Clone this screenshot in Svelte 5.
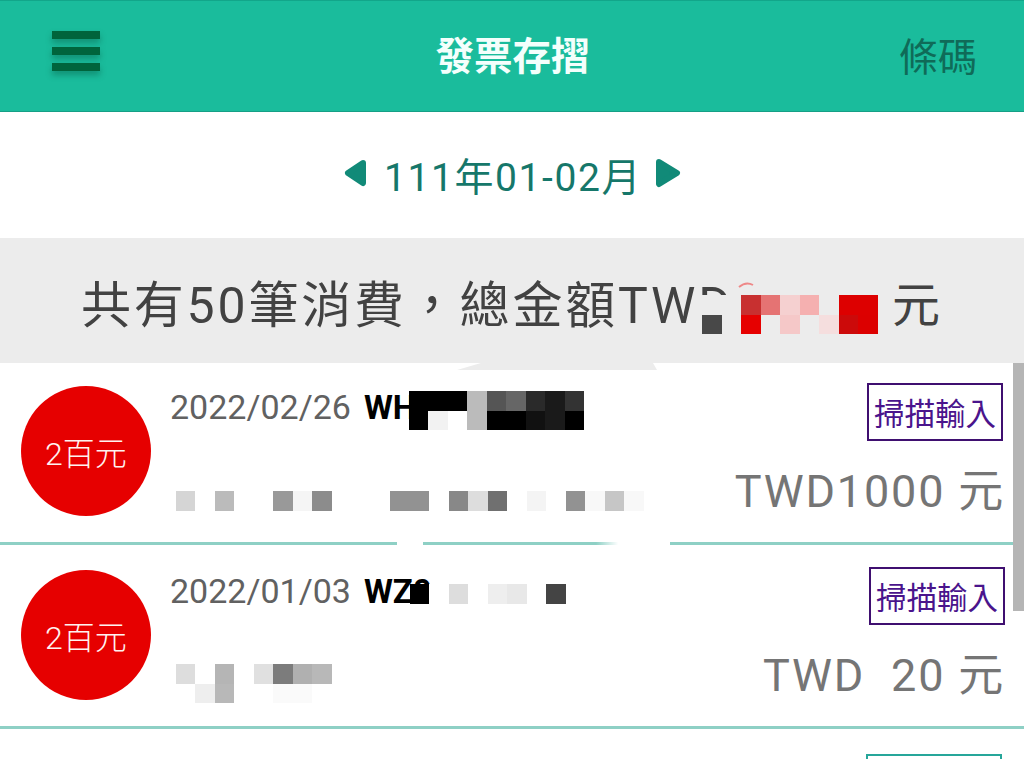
<script lang="ts">
  const bg = "#ececec";

  const items = [
    {
      date: "2022/02/26",
      code: "WH",
      amount: "TWD1000 元",
      shifted: false,
      name: {
        x: 408.5,
        y: 28,
        rows: [
          ["#000", "#000", "#000", "#bbb", "#555", "#666", "#2a2a2a", "#1a1a1a", "#333"],
          ["#000", "#f2f2f2", "#fff", "#bbb", "#000", "#000", "#111", "#1a1a1a", "#000"]
        ]
      },
      note: {
        x: 175.5,
        y: 128,
        rows: [
          ["#d5d5d5", "", "#bbb", "", "", "#999", "#f5f5f5", "#8c8c8c", "", "", "", "#929292", "#929292", "", "#888", "#ddd", "#707070", "", "#f4f4f4", "", "#929292", "#f8f8f8", "#c6c6c6", "#f8f8f8"]
        ]
      }
    },
    {
      date: "2022/01/03",
      code: "WZ0",
      amount: "TWD\u00a0 20 元",
      shifted: true,
      name: {
        x: 409.5,
        y: 39,
        rows: [["#000", "#fff", "#ddd", "", "#eee", "#e8e8e8", "", "#444"]]
      },
      note: {
        x: 175.5,
        y: 119,
        rows: [
          ["#ddd", "", "#b5b5b5", "", "#e0e0e0", "#7c7c7c", "#b0b0b0", "#b8b8b8"],
          ["", "#eee", "#b8b8b8", "", "", "#fafafa", "#fafafa", ""]
        ]
      }
    }
  ];

  const summaryMask = {
    x: 702,
    y: 57,
    rows: [
      [bg, bg, "#c83030", "#e57373", "#f5d0d0", "#f5b0b0", bg, "#dd0000", "#dd0000"],
      ["#484848", bg, "#e60000", bg, "#f5c8c8", bg, "#f5dede", "#cc0a0a", "#dc0000"],
      [bg, bg, bg, bg, bg, bg, bg, bg, bg]
    ]
  };
</script>

{#snippet mosaic(m)}
  <div class="mosaic" style="left: {m.x}px; top: {m.y}px">
    {#each m.rows as row}
      <div class="mosaic-row">
        {#each row as c}
          <span style="background: {c || 'transparent'}"></span>
        {/each}
      </div>
    {/each}
  </div>
{/snippet}

<div class="page">
  <header class="topbar">
    <div class="menu"><i></i><i></i><i></i></div>
    <h1>發票存摺</h1>
    <div class="barcode">條碼</div>
  </header>

  <div class="month">
    <svg width="24" height="28" viewBox="0 0 24 28"><path d="M20 4 L5 14 L20 24 Z" fill="#118a78" stroke="#118a78" stroke-width="6" stroke-linejoin="round" /></svg>
    <span>111年01-02月</span>
    <svg width="26" height="30" viewBox="0 0 26 30"><path d="M4 4 L22 15 L4 26 Z" fill="#118a78" stroke="#118a78" stroke-width="6" stroke-linejoin="round" /></svg>
  </div>

  <div class="summary">
    <span class="summary-text">共有50筆消費，總金額TWD</span>
    <span class="summary-unit">元</span>
    {@render mosaic(summaryMask)}
    <svg class="arc" width="16" height="6" viewBox="0 0 16 6"><path d="M1 5 Q8 -1 15 3" fill="none" stroke="#e88" stroke-width="2" /></svg>
    <div class="wedge"></div>
  </div>

  <div class="list">
    {#each items as item}
      <div class="row">
        <div class="badge">2百元</div>
        <div class="info">
          <div class="line"><span class="date">{item.date}</span> <b>{item.code}</b></div>
        </div>
        <div class="side">
          <div class="scan" class:shifted={item.shifted}>掃描輸入</div>
          <div class="amount">{item.amount}</div>
        </div>
        {@render mosaic(item.name)}
        {@render mosaic(item.note)}
      </div>
    {/each}
    <div class="last">
      <div class="scan teal"></div>
    </div>
    <div class="gap one"></div>
    <div class="gap two"></div>
    <div class="scrollbar"></div>
  </div>
</div>

<style>
  :global(body) {
    margin: 0;
    background: #fff;
    overflow: hidden;
  }

  .page {
    width: 1024px;
    height: 759px;
    overflow: hidden;
    font-family: Roboto, "Noto Sans CJK TC", sans-serif;
  }

  .topbar {
    height: 112px;
    box-sizing: border-box;
    background: #1abc9c;
    border-top: 1px solid #12a68a;
    border-bottom: 1px solid #169f86;
    display: grid;
    grid-template-columns: 1fr auto 1fr;
    align-items: center;
    padding: 0 47px 0 52px;
  }

  .menu {
    width: 48px;
    display: flex;
    flex-direction: column;
    gap: 8px;
    margin-bottom: 10px;
    filter: drop-shadow(0 4px 3px rgba(0, 60, 40, 0.35));
  }

  .menu i {
    display: block;
    height: 8px;
    background: #00643c;
  }

  h1 {
    margin: 0;
    font-size: 38.5px;
    font-weight: 700;
    color: #f4fffc;
    line-height: 1;
    position: relative;
    left: -2px;
    top: 1px;
  }

  .barcode {
    justify-self: end;
    font-size: 39px;
    color: #0f6b58;
    line-height: 1;
    padding-top: 4px;
  }

  .month {
    height: 126px;
    display: flex;
    align-items: center;
    justify-content: center;
    color: #16776a;
    font-size: 39px;
    padding-bottom: 2px;
    box-sizing: border-box;
  }

  .month svg {
    margin-top: -2px;
  }

  .month span {
    letter-spacing: 1.6px;
    margin: 0 13px 0 17px;
  }

  .summary {
    position: relative;
    height: 125px;
    background: #ececec;
    display: flex;
    align-items: center;
    padding: 10px 84px 0;
    box-sizing: border-box;
    color: #424242;
    font-size: 50px;
    line-height: 1;
  }

  .summary-text {
    white-space: nowrap;
    letter-spacing: 2.8px;
    margin-left: -3px;
  }

  .summary-unit {
    margin-left: auto;
    margin-right: 0;
    font-size: 48px;
  }

  .arc {
    position: absolute;
    left: 738px;
    top: 44px;
  }

  .wedge {
    position: absolute;
    left: 457px;
    top: 125px;
    width: 200px;
    height: 7px;
    background: #ececec;
    clip-path: polygon(12% 0, 98% 0, 100% 100%, 0 100%);
  }

  .mosaic {
    position: absolute;
    filter: blur(0.5px);
  }

  .mosaic-row {
    display: flex;
    height: 19.5px;
  }

  .mosaic-row span {
    width: 19.5px;
    flex: none;
  }

  .list {
    position: relative;
  }

  .row {
    position: relative;
    height: 182px;
    box-sizing: border-box;
    border-bottom: 3px solid #8ed0c5;
    display: flex;
    padding: 23px 0 0 21px;
  }

  .row:nth-child(2) {
    height: 184px;
    padding-top: 25px;
  }

  .last {
    padding: 25px 22px 0 0;
    display: flex;
    justify-content: flex-end;
  }

  .badge {
    width: 130px;
    height: 130px;
    border-radius: 50%;
    background: #e60000;
    color: #fff2f0;
    font-size: 32px;
    font-weight: 300;
    display: flex;
    align-items: center;
    justify-content: center;
    flex: none;
  }

  .info {
    flex: 1;
    padding-left: 19px;
  }

  .line {
    display: flex;
    align-items: baseline;
    gap: 13px;
    line-height: 42px;
    white-space: nowrap;
  }

  .date {
    font-size: 34px;
    color: #616161;
  }

  b {
    font-size: 33px;
    color: #000;
    font-weight: 700;
  }

  .side {
    display: flex;
    flex-direction: column;
    align-items: flex-end;
    padding-right: 21px;
    margin-top: -3px;
  }

  .scan {
    width: 136px;
    height: 58px;
    box-sizing: border-box;
    border: 2px solid #3f0f70;
    color: #4a148c;
    font-size: 30.5px;
    line-height: 59px;
    text-align: center;
    white-space: nowrap;
    overflow: hidden;
  }

  .scan.shifted {
    margin-right: -2px;
  }

  .scan.teal {
    border-color: #26a69a;
  }

  .amount {
    margin: 22px -2px 0 0;
    font-size: 45px;
    line-height: 58px;
    letter-spacing: 1.8px;
    color: #757575;
    white-space: pre;
  }

  .gap {
    position: absolute;
    top: 178px;
    height: 5px;
    background: #fff;
  }

  .gap.one {
    left: 397px;
    width: 26px;
  }

  .gap.two {
    left: 596px;
    width: 74px;
    background: linear-gradient(to right, rgba(255, 255, 255, 0), #fff 30%);
  }

  .scrollbar {
    position: absolute;
    right: 0;
    top: 0;
    width: 11px;
    height: 248px;
    background: #b5b5b5;
  }
</style>
